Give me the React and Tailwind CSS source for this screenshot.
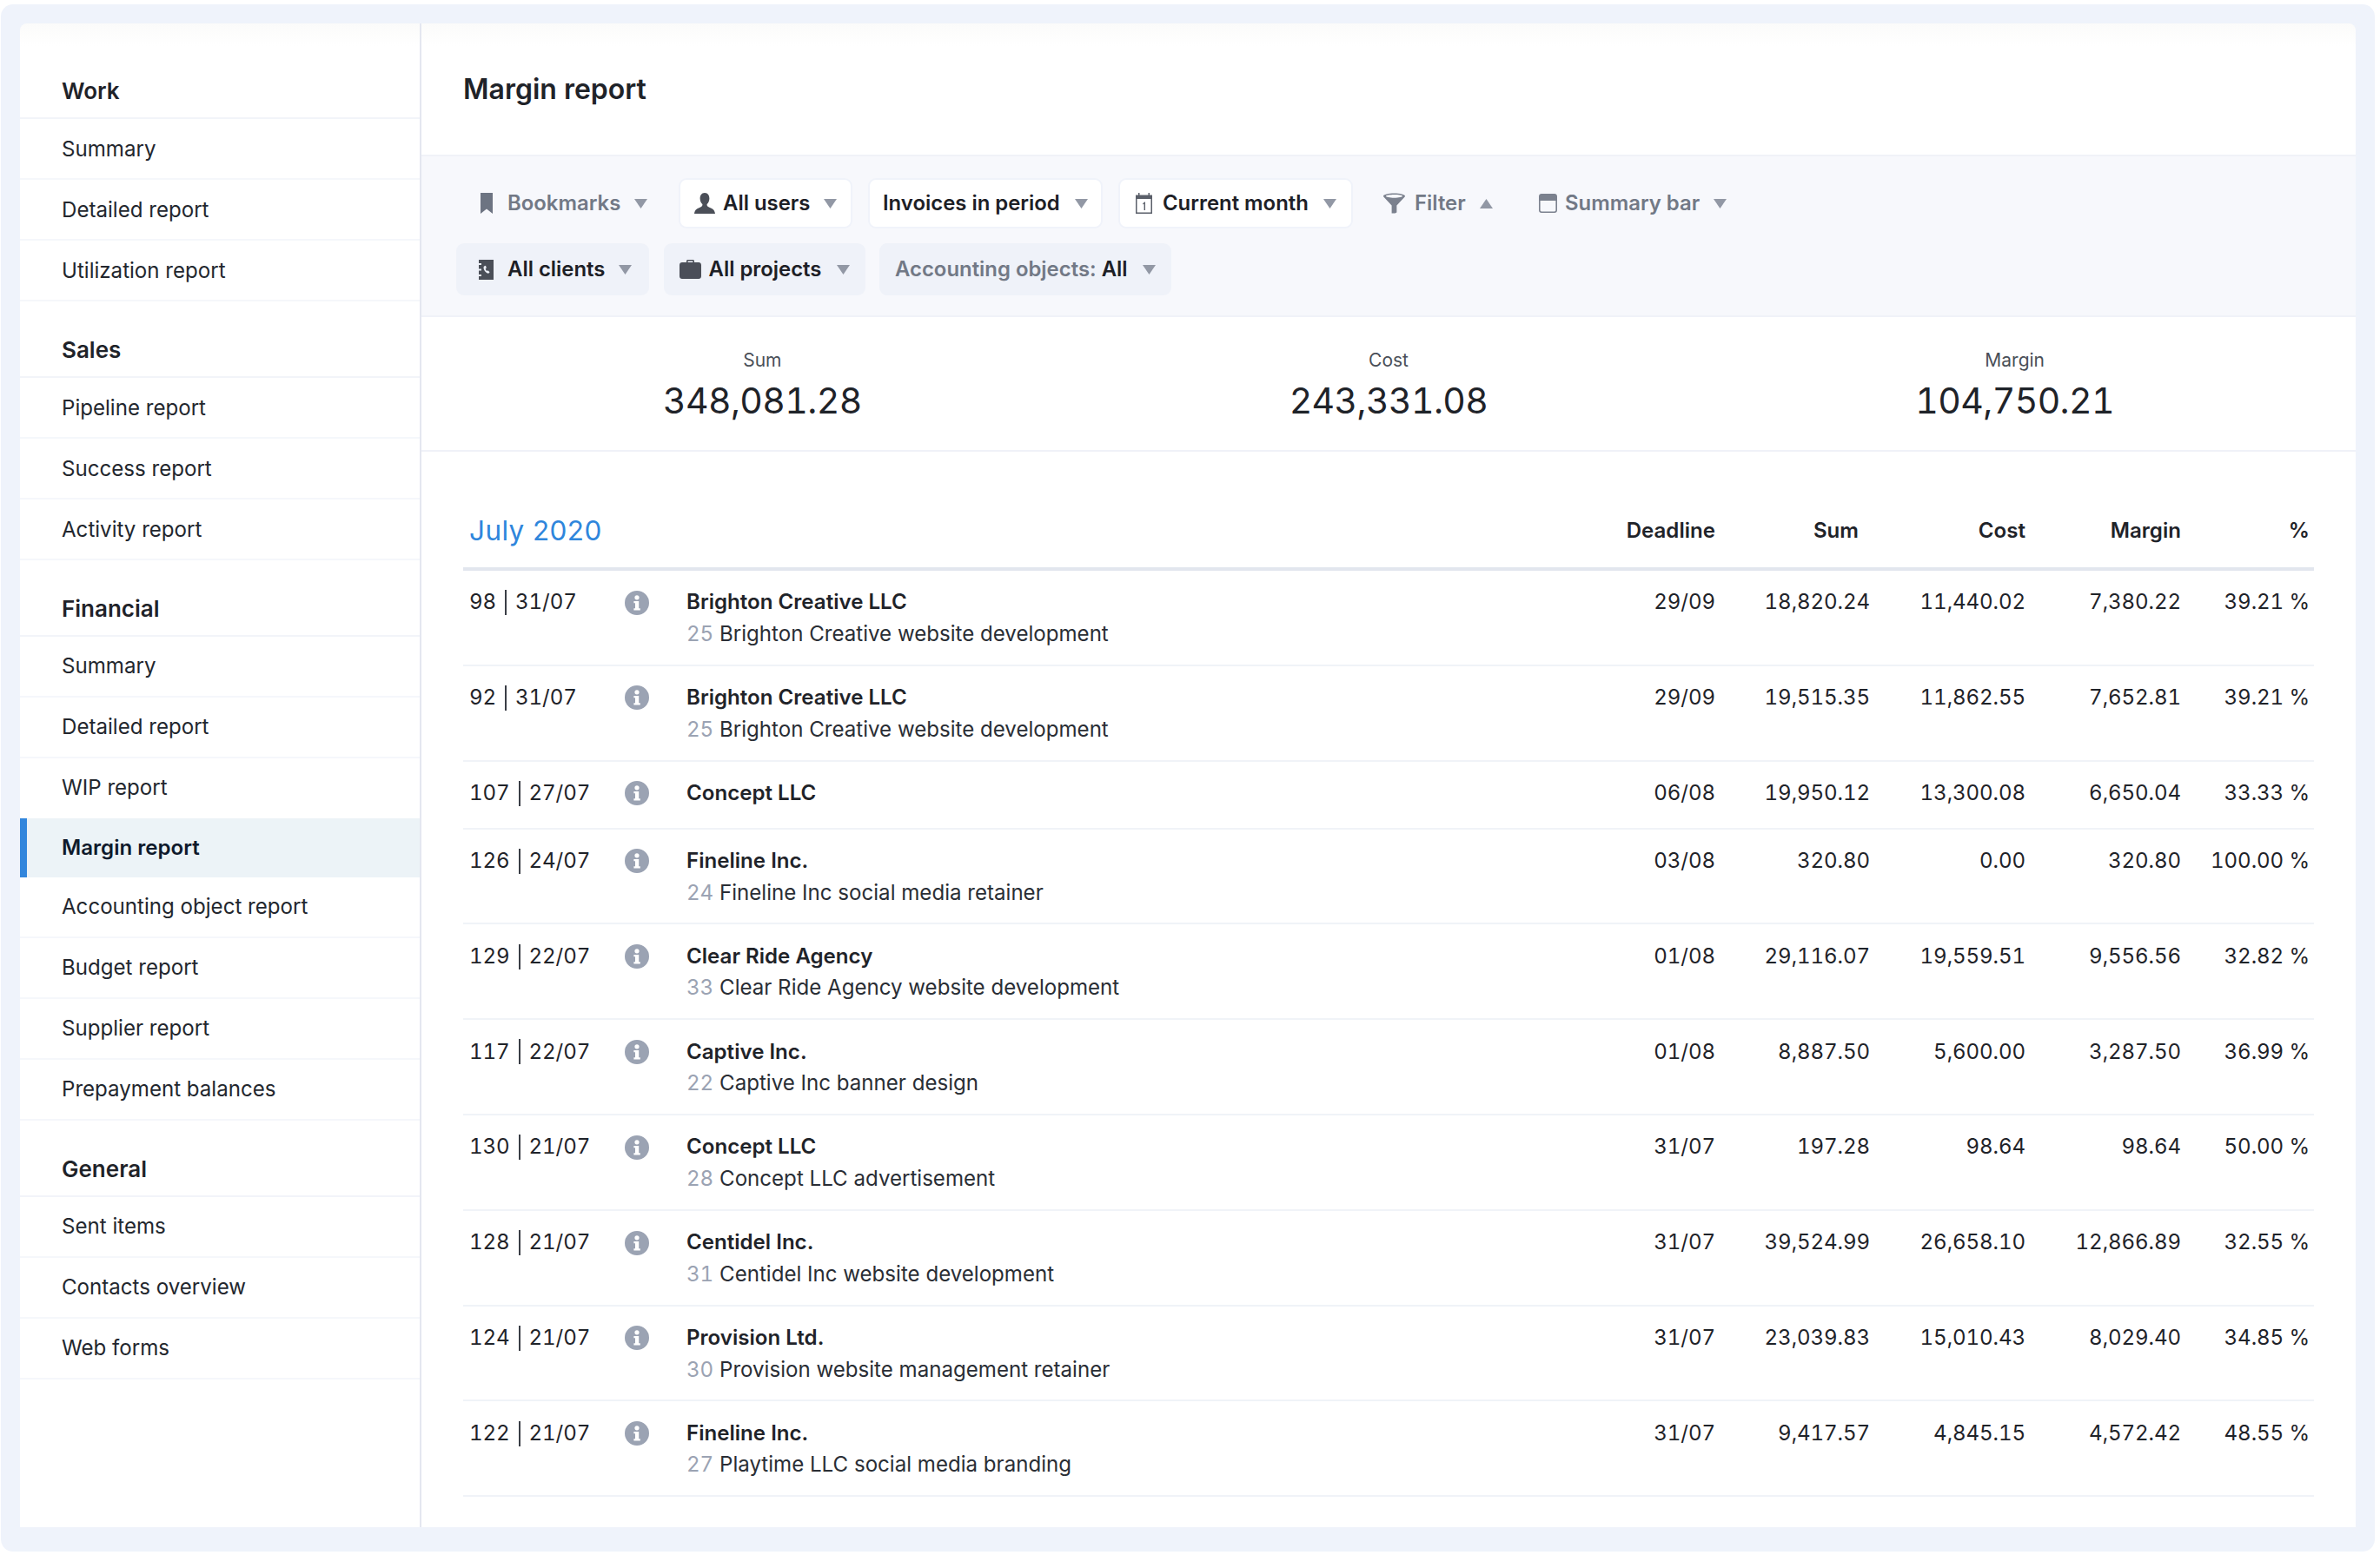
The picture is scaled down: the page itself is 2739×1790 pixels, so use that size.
const groups = [
  { title: "Work", first: true, items: ["Summary", "Detailed report", "Utilization report"] },
  { title: "Sales", items: ["Pipeline report", "Success report", "Activity report"] },
  { title: "Financial", items: ["Summary", "Detailed report", "WIP report", "Margin report", "Accounting object report", "Budget report", "Supplier report", "Prepayment balances"] },
  { title: "General", items: ["Sent items", "Contacts overview", "Web forms"] },
];

const rows = [
  ["98", "31/07", "Brighton Creative LLC", "25", "Brighton Creative website development", "29/09", "18,820.24", "11,440.02", "7,380.22", "39.21 %"],
  ["92", "31/07", "Brighton Creative LLC", "25", "Brighton Creative website development", "29/09", "19,515.35", "11,862.55", "7,652.81", "39.21 %"],
  ["107", "27/07", "Concept LLC", null, null, "06/08", "19,950.12", "13,300.08", "6,650.04", "33.33 %"],
  ["126", "24/07", "Fineline Inc.", "24", "Fineline Inc social media retainer", "03/08", "320.80", "0.00", "320.80", "100.00 %"],
  ["129", "22/07", "Clear Ride Agency", "33", "Clear Ride Agency website development", "01/08", "29,116.07", "19,559.51", "9,556.56", "32.82 %"],
  ["117", "22/07", "Captive Inc.", "22", "Captive Inc banner design", "01/08", "8,887.50", "5,600.00", "3,287.50", "36.99 %"],
  ["130", "21/07", "Concept LLC", "28", "Concept LLC advertisement", "31/07", "197.28", "98.64", "98.64", "50.00 %"],
  ["128", "21/07", "Centidel Inc.", "31", "Centidel Inc website development", "31/07", "39,524.99", "26,658.10", "12,866.89", "32.55 %"],
  ["124", "21/07", "Provision Ltd.", "30", "Provision website management retainer", "31/07", "23,039.83", "15,010.43", "8,029.40", "34.85 %"],
  ["122", "21/07", "Fineline Inc.", "27", "Playtime LLC social media branding", "31/07", "9,417.57", "4,845.15", "4,572.42", "48.55 %"],
];

const Caret = ({ up }) => (
  <svg width="15" height="11" viewBox="0 0 16 11" preserveAspectRatio="none" className="shrink-0 ml-auto">
    <path d={up ? "M8 0L16 11H0Z" : "M0 0H16L8 11Z"} fill="#9298a5" />
  </svg>
);

const BookmarkIcon = () => (
  <svg width="14" height="24" viewBox="0 0 14 24" className="shrink-0"><path d="M0 0H14V24L7 18.5L0 24Z" fill="#6d7482" /></svg>
);
const UserIcon = () => (
  <svg width="24" height="24" viewBox="0 0 24 24" className="shrink-0"><path d="M12 0C8.2 0 6.6 3 6.6 6.4C6.6 9.4 8 11.6 9.4 13C9.6 14.8 8.8 15.8 6.6 16.8C3.6 18.2 0.6 19 0 24H24C23.4 19 20.4 18.2 17.4 16.8C15.2 15.8 14.4 14.8 14.6 13C16 11.6 17.4 9.4 17.4 6.4C17.4 3 15.8 0 12 0Z" fill="#4b4f58" /></svg>
);
const ClientIcon = () => (
  <svg width="17" height="23" viewBox="0 0 17 23" className="shrink-0">
    <path fillRule="evenodd" d="M0 0H17V23H0V19H3V17H0V12.5H3V10.5H0V6H3V4H0ZM6 7.5C5.2 8.6 5.4 10.4 6.6 12.4C7.8 14.4 9.4 15.6 11.2 15.8L12.6 14.2L10.4 12.2L9.2 12.9C8.4 12.2 8 11.4 7.7 10.4L8.8 9.6L8 6.8Z" fill="#4b4f58" />
  </svg>
);
const CaseIcon = () => (
  <svg width="25" height="22" viewBox="0 0 25 22" className="shrink-0">
    <path fillRule="evenodd" d="M8 3V1.5C8 .7 8.7 0 9.5 0H15.5C16.3 0 17 .7 17 1.5V3H22C23.7 3 25 4.3 25 6V19C25 20.7 23.7 22 22 22H3C1.3 22 0 20.7 0 19V6C0 4.3 1.3 3 3 3ZM9.6 3H15.4V1.6H9.6Z" fill="#4b4f58" />
  </svg>
);
const CalendarIcon = () => (
  <svg width="19" height="24" viewBox="0 0 19 24" className="shrink-0">
    <path fillRule="evenodd" d="M0 2.5H3V0H4.5V2.5H14.5V0H16V2.5H19V24H0ZM1.5 7V22.5H17.5V7Z" fill="#5a5f69" />
    <path d="M8.2 12.2L10.2 10.6H11V20H9.6V12.6L8.2 13.6Z" fill="#5a5f69" />
  </svg>
);
const FunnelIcon = () => (
  <svg width="25" height="24" viewBox="0 0 26 24" className="shrink-0">
    <path fillRule="evenodd" d="M13 0C20 0 26 1.4 26 3.4C26 4 25.6 4.4 25 5L16 14.5V23L14 24H10V14.5L1 5C.4 4.4 0 4 0 3.4C0 1.4 6 0 13 0ZM13 1.6C7.6 1.6 3 2.4 3 3.4C3 4.4 7.6 5.4 13 5.4C18.4 5.4 23 4.4 23 3.4C23 2.4 18.4 1.6 13 1.6Z" fill="#7b818e" />
  </svg>
);
const BarIcon = () => (
  <svg width="21" height="22" viewBox="0 0 21 22" className="shrink-0">
    <path fillRule="evenodd" d="M3 0H18C19.7 0 21 1.3 21 3V19C21 20.7 19.7 22 18 22H3C1.3 22 0 20.7 0 19V3C0 1.3 1.3 0 3 0ZM1.6 8V19C1.6 19.8 2.2 20.4 3 20.4H18C18.8 20.4 19.4 19.8 19.4 19V8Z" fill="#7b818e" />
  </svg>
);
const InfoIcon = () => (
  <svg width="28" height="28" viewBox="0 0 28 28" className="shrink-0">
    <path fillRule="evenodd" d="M14 0A14 14 0 1 1 14 28A14 14 0 0 1 14 0ZM14 5.2A2.6 2.6 0 1 0 14 10.4A2.6 2.6 0 0 0 14 5.2ZM10.4 12V14.2H12V20.2H10.4V22.6H17.8V20.2H16.2V12Z" fill="#9ba3b3" />
  </svg>
);

const Chip = ({ className, icon, up, children }) => (
  <div className={"flex items-center text-[23.9px] font-semibold whitespace-nowrap rounded-[9px] " + className}>
    {icon}
    {children}
    <Caret up={up} />
  </div>
);

const white = "h-[58px] bg-white border-2 border-[#f0f3fa] text-[#1d2026] ";
const ghost = "h-[58px] text-[#727986] ";
const fill = "h-[60px] bg-[#eff2f9] text-[#1d2026] ";
const grid = "grid grid-cols-[179px_71px_1fr_120px_178px_179px_179px_148px] pl-[7px] pr-[5px]";
const num = "tabular-nums tracking-[-0.1px]";

export default function App() {
  return (
    <div className="w-[2739px] h-[1790px] bg-white pt-[5px] pl-[1px] pr-[6px] pb-[4px] font-['Inter','Noto_Sans',sans-serif] text-[#1f2329] overflow-hidden">
      <div className="h-full bg-[#eff3fb] rounded-[14px] pt-[22px] pl-[22px] pr-[22px] pb-[28px]">
        <div className="h-full bg-[linear-gradient(#fbfbfa,#ffffff_26px)] flex rounded-t-[8px] overflow-hidden">
          <aside className="w-[460px] shrink-0 border-r-[2px] border-[#e4e7f0] box-content">
            {groups.map((g) => (
              <section key={g.title}>
                <div className={"flex items-end pl-[48px] border-b-2 border-[#f2f4f9] text-[26px] font-semibold text-[#1f2329] " + (g.first ? "h-[110px] pb-[11px]" : "h-[88px] pb-[11px]")}>
                  {g.title}
                </div>
                {g.items.map((it) =>
                  it === "Margin report" ? (
                    <div key={it} className="h-[68px] flex items-center bg-[#ecf3f7] border-l-[8px] border-[#3286dc] pl-[40px] text-[24.1px] font-semibold text-[#0f1a2c]">
                      {it}
                    </div>
                  ) : (
                    <div key={g.title + it} className={"flex items-center pl-[48px] text-[24.1px] text-[#23272e] " + (it === "WIP report" ? "h-[69px]" : "h-[70px] border-b-2 border-[#f5f7fb]") + (g.title === "Work" || g.title === "Sales" ? " pt-[2px]" : "")}>
                      {it}
                    </div>
                  )
                )}
              </section>
            ))}
          </aside>

          <main className="flex-1 min-w-0 flex flex-col">
            <header className="h-[151px] shrink-0 flex items-center pl-[48px] text-[32px] font-semibold text-[#1f2329]">
              Margin report
            </header>

            <div className="h-[187px] shrink-0 bg-[#f7f8fc] border-y-2 border-[#f0f2f8] pl-[40px] pt-[25px] flex flex-col gap-[17px]">
              <div className="flex gap-[18px]">
                <Chip className={ghost + "w-[238px] pl-[28px] pr-[18px]"} icon={<BookmarkIcon />}><span className="ml-[17px]">Bookmarks</span></Chip>
                <Chip className={white + "w-[200px] pl-[16px] pr-[16px]"} icon={<UserIcon />}><span className="ml-[9px]">All users</span></Chip>
                <Chip className={white + "w-[270px] pl-[15px] pr-[15px]"}>Invoices in period</Chip>
                <Chip className={white + "w-[270px] pl-[18px] pr-[17px]"} icon={<CalendarIcon />}><span className="ml-[12px]">Current month</span></Chip>
                <Chip className={ghost + "w-[161px] pl-[17px] pr-[18px]"} up icon={<FunnelIcon />}><span className="ml-[11px]">Filter</span></Chip>
                <Chip className={ghost + "w-[251px] pl-[17px] pr-[18px]"} icon={<BarIcon />}><span className="ml-[9px]">Summary bar</span></Chip>
              </div>
              <div className="flex gap-[16.5px]">
                <Chip className={fill + "w-[222px] pl-[26px] pr-[20px]"} icon={<ClientIcon />}><span className="ml-[16px]">All clients</span></Chip>
                <Chip className={fill + "w-[232px] pl-[18px] pr-[18px]"} icon={<CaseIcon />}><span className="ml-[9px]">All projects</span></Chip>
                <Chip className={fill + "w-[336px] pl-[18px] pr-[18px] text-[#727986]"}><span>Accounting objects: <span className="text-[#1d2026]">All</span></span></Chip>
              </div>
            </div>

            <div className="h-[155px] shrink-0 border-b-2 border-[#f0f2f8] grid grid-cols-3 px-[32px] pt-[34px]">
              {[["Sum", "348,081.28"], ["Cost", "243,331.08"], ["Margin", "104,750.21"]].map(([l, v]) => (
                <div key={l} className="flex flex-col items-center">
                  <div className="text-[21px] leading-[32px] text-[#4a4f58]">{l}</div>
                  <div className="text-[41px] leading-[60px] tabular-nums tracking-[-0.6px] text-[#1f2329]">{v}</div>
                </div>
              ))}
            </div>

            <div className="mx-[48px]">
              <div className={grid + " h-[137px] border-b-4 border-[#e2e6ee] items-end pb-[20px] text-[24.1px] font-semibold leading-[44px]"}>
                <div className="col-span-3 text-[31.5px] font-normal tracking-[0.4px] text-[#2f86dc]">July 2020</div>
                <div className="text-right">Deadline</div>
                <div className="text-right pr-[13px]">Sum</div>
                <div className="text-right">Cost</div>
                <div className="text-right">Margin</div>
                <div className="text-right">%</div>
              </div>
              {rows.map((r, i) => (
                <div key={i} className={grid + " pt-[18.3px] border-b-2 border-[#f0f3f8] text-[24.1px] leading-[36.75px] " + (r[3] ? "pb-[16px]" : "pb-[21px]")}>
                  <div className={"flex items-center h-[36.75px] " + num}>
                    {r[0]}<span className="inline-block w-[2px] h-[29px] bg-[#3a3e46] mx-[10px]" />{r[1]}
                  </div>
                  <div className="flex items-center h-[36.75px]"><InfoIcon /></div>
                  <div>
                    <div className="font-semibold text-[#1f2329]">{r[2]}</div>
                    {r[3] ? (
                      <div className="text-[#2a2e35]"><span className="text-[#9ba3b3] tabular-nums">{r[3]}</span> {r[4]}</div>
                    ) : null}
                  </div>
                  <div className={"text-right " + num}>{r[5]}</div>
                  <div className={"text-right " + num}>{r[6]}</div>
                  <div className={"text-right " + num}>{r[7]}</div>
                  <div className={"text-right " + num}>{r[8]}</div>
                  <div className={"text-right " + num}>{r[9]}</div>
                </div>
              ))}
            </div>
          </main>
        </div>
      </div>
    </div>
  );
}
